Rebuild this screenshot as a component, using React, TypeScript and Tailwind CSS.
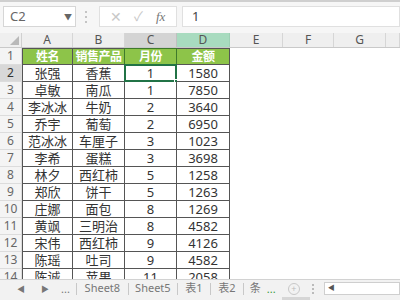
import React from "react";

/* Sheet data: row 1 is the green header row */
const ROWS: string[][] = [
  ["姓名", "销售产品", "月份", "金额"],
  ["张强", "香蕉", "1", "1580"],
  ["卓敏", "南瓜", "1", "7850"],
  ["李冰冰", "牛奶", "2", "3640"],
  ["乔宇", "葡萄", "2", "6950"],
  ["范冰冰", "车厘子", "3", "1023"],
  ["李希", "蛋糕", "3", "3698"],
  ["林夕", "西红柿", "5", "1258"],
  ["郑欣", "饼干", "5", "1263"],
  ["庄娜", "面包", "8", "1269"],
  ["黄飒", "三明治", "8", "4582"],
  ["宋伟", "西红柿", "9", "4126"],
  ["陈瑶", "吐司", "9", "4582"],
  ["陈诚", "苹果", "11", "2058"],
];

const COLS = ["A", "B", "C", "D", "E", "F", "G", ""];
const GRID =
  "grid grid-cols-[22px_51px_52px_52px_53px_53px_51px_52px_1fr]";
const FONT = "font-['Noto_Sans','Noto_Sans_CJK_SC',sans-serif]";

function FormulaBar() {
  return (
    <div className="flex h-[33px] shrink-0 items-center border-t-2 border-[#cfcfcf] bg-[#f6f6f6] pb-[2px]">
      <div className="ml-[3px] flex h-[21px] w-[73px] items-center justify-between border border-[#d6d6d6] bg-white pl-[6px] pr-[3px]">
        <span className="text-[13px] text-[#666]">C2</span>
        <span className="text-[8px] text-[#666]">▼</span>
      </div>
      <div className="mx-[8px] flex h-[14px] w-[4px] flex-col items-center justify-between py-[1px]">
        <span className="h-[2px] w-[2px] bg-[#c4c4c4]" />
        <span className="h-[2px] w-[2px] bg-[#c4c4c4]" />
        <span className="h-[2px] w-[2px] bg-[#c4c4c4]" />
      </div>
      <div className="ml-[3px] flex h-[21px] w-[78px] items-center border border-[#e0e0e0] bg-white">
        <span className="ml-[10px] text-[14px] leading-none text-[#c8c8c8]">✕</span>
        <span className="ml-[12px] text-[13px] leading-none text-[#c8c8c8]">✓</span>
        <span className="ml-[13px] font-['Liberation_Serif',serif] text-[13px] italic leading-none text-[#777]">
          fx
        </span>
      </div>
      <div className="ml-[5px] flex h-[21px] flex-1 items-center border border-[#e0e0e0] bg-white pl-[9px]">
        <span className="text-[13px] text-[#444]">1</span>
      </div>
    </div>
  );
}

function ColumnHeader() {
  return (
    <div className={`${GRID} h-[15px] shrink-0 border-b border-[#c9c9c9] bg-[#efefef]`}>
      <div className="relative border-r border-[#d0d0d0]">
        <span className="absolute bottom-[2px] right-[2px] h-0 w-0 border-b-[9px] border-l-[9px] border-b-[#b9b9b9] border-l-transparent" />
      </div>
      {COLS.map((c) => (
        <div
          key={c || "h"}
          className={`flex items-center justify-center border-r text-[12px] leading-none text-[#555] ${
            c === "C"
              ? "border-[#c0c0c0] bg-[#d4d4d4]"
              : c === "D"
                ? "border-[#9dcfb4] bg-[#a8dbbf]"
                : "border-[#d6d6d6]"
          }`}
        >
          {c}
        </div>
      ))}
    </div>
  );
}

function Row({ cells, index }: { cells: string[]; index: number }) {
  const head = index === 0;
  const active = index === 1;
  return (
    <div className={`${GRID} h-[17px] shrink-0`}>
      <div
        className={`flex items-center justify-center overflow-hidden border-b border-r border-[#dcdcdc] text-[12px] leading-none ${
          active ? "bg-[#d8d8d8] text-[#333]" : "bg-[#f4f4f4] text-[#666]"
        }`}
      >
        {index + 1}
      </div>
      {cells.map((v, i) => (
        <div
          key={i}
          className={`relative flex items-center justify-center whitespace-nowrap border-b border-r border-[#555] leading-none ${
            i === 0 ? "border-l" : ""
          } ${
            head
              ? "border-t bg-[#8dc449] text-[12px] font-bold tracking-[-0.5px] text-white"
              : "bg-white text-[13px] text-[#333]"
          }`}
        >
          {v}
          {head && i === 2 && (
            <span className="pointer-events-none absolute inset-[-1px] border border-[#3f7a2b]" />
          )}
          {active && i === 2 && (
            <>
              <span className="pointer-events-none absolute inset-[-1px] border-2 border-[#217346]" />
              <span className="absolute -bottom-[3px] -right-[3px] h-[5px] w-[5px] border border-white bg-[#217346]" />
            </>
          )}
        </div>
      ))}
      <div />
      <div />
      <div />
      <div />
    </div>
  );
}

function TabBar() {
  const Sep = () => <span className="h-[12px] w-px bg-[#c8c8c8]" />;
  return (
    <div className="relative z-10 flex h-[18px] shrink-0 items-center border-t border-[#d2d2d2] bg-[#f2f2f2] text-[11px] text-[#777]">
      <span className="ml-[17px] text-[8px]">◀</span>
      <span className="ml-[16px] text-[8px]">▶</span>
      <span className="ml-[12px] leading-none">...</span>
      <span className="ml-[6px]" />
      <Sep />
      <span className="w-[51px] text-center">Sheet8</span>
      <Sep />
      <span className="w-[48px] text-center">Sheet5</span>
      <Sep />
      <span className="w-[32px] text-center">表1</span>
      <Sep />
      <span className="w-[32px] text-center">表2</span>
      <Sep />
      <span className="ml-[6px]">条</span>
      <span className="ml-[6px] leading-none text-[#3a9a3a]">...</span>
      <span className="ml-[12px] flex h-[12px] w-[12px] items-center justify-center rounded-full border border-[#c8c8c8] text-[9px] leading-none text-[#bbb]">
        +
      </span>
      <span className="ml-[12px] flex h-[10px] w-[2px] flex-col justify-between">
        <span className="h-[2px] w-[2px] bg-[#bbb]" />
        <span className="h-[2px] w-[2px] bg-[#bbb]" />
        <span className="h-[2px] w-[2px] bg-[#bbb]" />
      </span>
      <div className="ml-[10px] flex h-[13px] flex-1 items-center border border-[#cfcfcf] bg-white pl-[3px]">
        <span className="text-[7px] text-[#555]">◀</span>
      </div>
    </div>
  );
}

export default function App() {
  return (
    <div className={`flex h-[300px] w-[400px] flex-col overflow-hidden bg-white ${FONT}`}>
      <FormulaBar />
      <ColumnHeader />
      <div className="flex min-h-0 flex-1 flex-col overflow-hidden">
        {ROWS.map((r, i) => (
          <Row key={i} cells={r} index={i} />
        ))}
      </div>
      <TabBar />
      <div className="flex h-[3px] shrink-0 bg-[#f2f2f2]">
        <span className="ml-[282px] h-full w-[28px] bg-[#d6d6d6]" />
      </div>
    </div>
  );
}
